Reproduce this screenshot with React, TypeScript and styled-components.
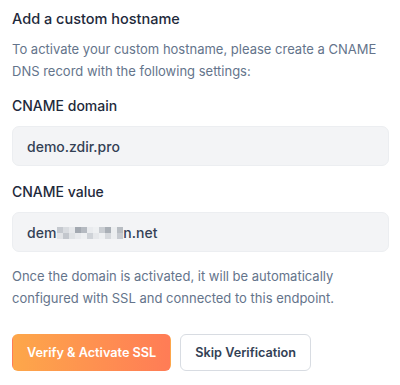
import React from "react";
import styled, { createGlobalStyle } from "styled-components";

const GlobalStyle = createGlobalStyle`
  body {
    margin: 0;
    background: #ffffff;
    font-family: Inter, "Noto Sans", sans-serif;
  }
`;

const Panel = styled.div`
  padding: 9px 11px 0 12px;
  width: 400px;
  box-sizing: border-box;
`;

const Title = styled.h2`
  margin: 0;
  font-size: 14.5px;
  line-height: 20px;
  font-weight: 500;
  color: #1e293b;
`;

const Text = styled.p<{ $top: number }>`
  margin: ${p => p.$top}px 0 0;
  font-size: 13px;
  line-height: 21.5px;
  color: #64748b;
`;

const Label = styled.div<{ $top: number }>`
  margin-top: ${p => p.$top}px;
  font-size: 14px;
  line-height: 20px;
  font-weight: 500;
  color: #1e293b;
`;

const Field = styled.div`
  margin-top: 10px;
  height: 40px;
  display: flex;
  align-items: center;
  padding: 0 14px;
  background: #f3f4f6;
  border: 1px solid #eceef1;
  border-radius: 7px;
  font-size: 14px;
  font-weight: 500;
  color: #334155;
  box-sizing: border-box;
`;

const Pixelated = styled.span`
  display: inline-grid;
  grid-template-columns: repeat(11, 6px);
  grid-auto-rows: 6px;
  margin: 2px 0 0 1px;
`;

const Cell = styled.span<{ $c: string }>`
  background: ${p => p.$c};
`;

const Actions = styled.div`
  display: flex;
  gap: 9px;
  margin-top: 25px;
`;

const Button = styled.button<{ $primary?: boolean }>`
  height: 37px;
  padding: 0 14px;
  border-radius: 6px;
  font-family: Inter, "Noto Sans", sans-serif;
  font-size: 12.7px;
  font-weight: 600;
  cursor: pointer;
  border: 1px solid ${p => (p.$primary ? "transparent" : "#d8dce2")};
  color: ${p => (p.$primary ? "#ffffff" : "#334155")};
  background: ${p =>
    p.$primary ? "linear-gradient(90deg, #fda74a 0%, #ff7c56 100%)" : "#ffffff"};
`;

const blurCells = [
  "#c5c9cf", "#d9dce0", "#e6e8eb", "#a3a9b1", "#b5bac1", "#e9ebee",
  "#eef0f2", "#c9cdd2", "#a9afb6", "#eceef0", "#b8bdc3",
  "#e2e4e7", "#c3c7cd", "#dfe2e5", "#e8eaed", "#eef0f2", "#cfd3d8",
  "#e6e8eb", "#eef0f2", "#d6d9dd", "#eceef0", "#c7cbd1",
];

export default function App() {
  return (
    <>
      <GlobalStyle />
      <Panel>
        <Title>Add a custom hostname</Title>
        <Text $top={10}>
          To activate your custom hostname, please create a CNAME DNS record with the
          following settings:
        </Text>
        <Label $top={14}>CNAME domain</Label>
        <Field>demo.zdir.pro</Field>
        <Label $top={16}>CNAME value</Label>
        <Field>
          dem
          <Pixelated>
            {blurCells.map((c, i) => (
              <Cell key={i} $c={c} />
            ))}
          </Pixelated>
          n.net
        </Field>
        <Text $top={14}>
          Once the domain is activated, it will be automatically configured with SSL and
          connected to this endpoint.
        </Text>
        <Actions>
          <Button $primary>Verify &amp; Activate SSL</Button>
          <Button>Skip Verification</Button>
        </Actions>
      </Panel>
    </>
  );
}
